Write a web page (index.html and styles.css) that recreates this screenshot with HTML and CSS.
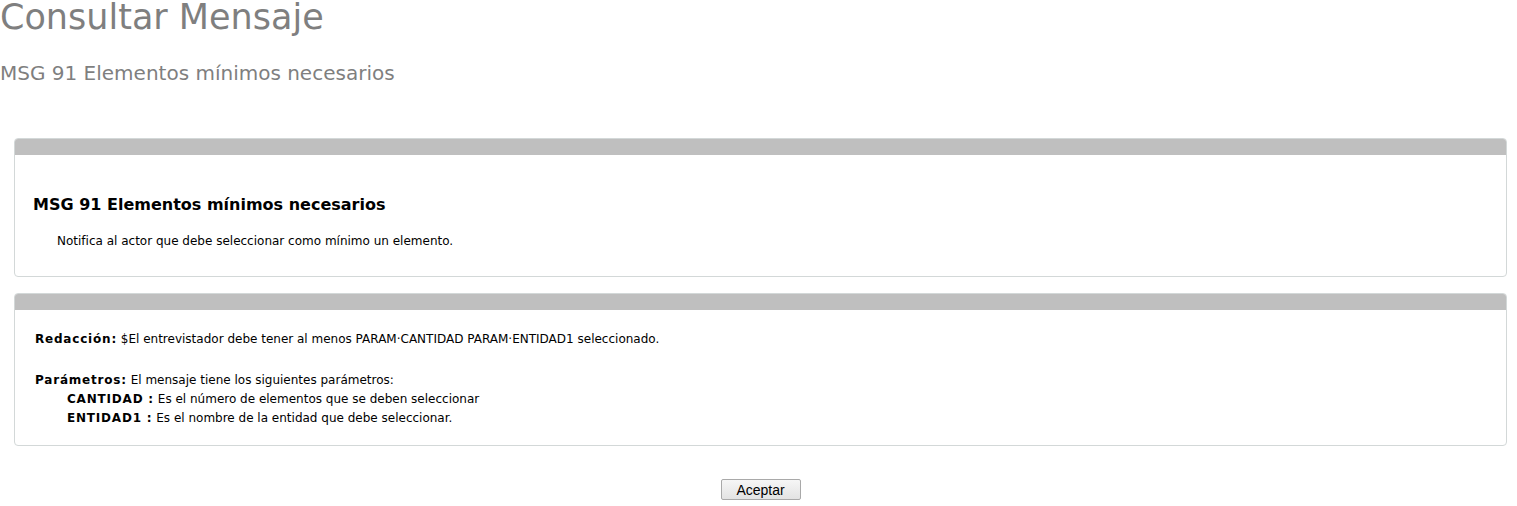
FILE: index.html
```html
<!DOCTYPE html>
<html lang="es">
<head>
<meta charset="utf-8">
<title>Consultar Mensaje</title>
<link rel="stylesheet" href="styles.css">
</head>
<body>
<h1 class="page-title">Consultar Mensaje</h1>
<h2 class="page-subtitle">MSG 91 Elementos mínimos necesarios</h2>
<div class="content">
  <section class="panel">
    <div class="panel-bar"></div>
    <div class="panel-body panel-body-first">
      <h3 class="msg-title">MSG 91 Elementos mínimos necesarios</h3>
      <p class="msg-desc">Notifica al actor que debe seleccionar como mínimo un elemento.</p>
    </div>
  </section>
  <section class="panel">
    <div class="panel-bar"></div>
    <div class="panel-body panel-body-second">
      <p class="row"><span class="label">Redacción:</span> $El entrevistador debe tener al menos PARAM·CANTIDAD PARAM·ENTIDAD1 seleccionado.</p>
      <p class="row row-params"><span class="label">Parámetros:</span> El mensaje tiene los siguientes parámetros:</p>
      <p class="row param"><span class="label">CANTIDAD :</span> Es el número de elementos que se deben seleccionar</p>
      <p class="row param"><span class="label">ENTIDAD1 :</span> Es el nombre de la entidad que debe seleccionar.</p>
    </div>
  </section>
  <div class="actions">
    <button class="btn" type="button">Aceptar</button>
  </div>
</div>
</body>
</html>
```
FILE: styles.css
```css
html, body {
  margin: 0;
  padding: 0;
  background: #ffffff;
}
body {
  font-family: "DejaVu Sans", Verdana, sans-serif;
  color: #000;
}
.page-title {
  margin: 0;
  font-weight: normal;
  font-size: 35px;
  line-height: 34px;
  color: #7f7f7f;
}
.page-subtitle {
  margin: 27px 0 0 0;
  font-weight: normal;
  font-size: 20px;
  line-height: 24px;
  color: #7f7f7f;
}
.content {
  padding: 53px 10px 0 14px;
}
.panel {
  border: 1px solid #d3d8d8;
  border-radius: 4px;
  background: #fff;
  margin-bottom: 16px;
  overflow: hidden;
}
.panel-bar {
  height: 16px;
  background: #bfbfbf;
}
.panel-body-first {
  padding: 39px 18px 27px 18px;
}
.msg-title {
  margin: 0;
  font-size: 16px;
  font-weight: bold;
  line-height: 22px;
}
.msg-desc {
  margin: 17px 0 0 24px;
  font-size: 12px;
  line-height: 16px;
}
.panel-body-second {
  padding: 20px 20px 17px 20px;
}
.row {
  margin: 0;
  font-size: 12px;
  line-height: 19px;
}
.row-params {
  margin-top: 22px;
}
.param {
  padding-left: 32px;
}
.label {
  font-weight: bold;
  letter-spacing: 0.8px;
}
.actions {
  display: flex;
  justify-content: center;
  padding-top: 17px;
}
.btn {
  font-family: "Liberation Sans", Arial, sans-serif;
  font-size: 14px;
  width: 80px;
  height: 21px;
  padding: 0;
  background: linear-gradient(#f6f6f6, #e3e3e3);
  border: 1px solid #a9a9a9;
  border-radius: 2px;
  color: #000;
}
```
